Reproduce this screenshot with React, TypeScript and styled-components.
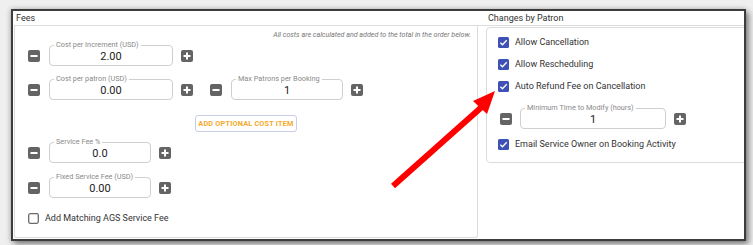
import React from 'react';
import styled, { createGlobalStyle } from 'styled-components';

const GlobalStyle = createGlobalStyle`
  body {
    margin: 0;
    background: #efefef;
    font-family: Roboto, "Liberation Sans", Arial, sans-serif;
  }
`

const Page = styled.div`
  position: relative;
  width: 753px;
  height: 245px;
  padding: 9px 0 0 11px;
  box-sizing: border-box;
  background: #efefef;
`

const Frame = styled.div`
  width: 735px;
  height: 232px;
  box-sizing: border-box;
  border: 2px solid #3c3c3c;
  background: #fff;
  overflow: hidden;
  display: flex;
  box-shadow: 3px 3px 6px rgba(0, 0, 0, 0.45), -1px 0 5px rgba(0, 0, 0, 0.2);
`

const FeesColumn = styled.div`
  margin-left: 1px;
  width: 464px;
  display: flex;
  flex-direction: column;
`

const ChangesColumn = styled.div`
  flex: 1;
  min-width: 0;
  display: flex;
  flex-direction: column;
`

const SectionTitle = styled.div<{ $indent: number }>`
  height: 14px;
  line-height: 14px;
  padding-left: ${p => p.$indent}px;
  border-bottom: 1px solid #dcdcdc;
  font-size: 9px;
  color: #333;
  white-space: nowrap;
`

const FeesBox = styled.div`
  height: 207px;
  border: 1px solid #dcdcdc;
  border-top: none;
  border-radius: 0 0 3px 3px;
  padding: 4px 6px 0 13px;
  display: flex;
  flex-direction: column;
`

const Note = styled.div`
  text-align: right;
  font-size: 7.1px;
  line-height: 10px;
  font-style: italic;
  color: #777;
  margin-bottom: 1px;
`

const StepperRow = styled.div<{ $top: number }>`
  display: flex;
  align-items: flex-end;
  margin-top: ${p => p.$top}px;
`

const StepButton = styled.svg<{ $before: number; $after: number }>`
  width: 12px;
  height: 12px;
  margin-bottom: 4px;
  margin-left: ${p => p.$before}px;
  margin-right: ${p => p.$after}px;
  flex-shrink: 0;
`

const Field = styled.fieldset<{ $width: number }>`
  width: ${p => p.$width}px;
  box-sizing: border-box;
  margin: 0;
  padding: 0;
  border: 1px solid #cfcfcf;
  border-radius: 4px;
  min-width: 0;
`

const Legend = styled.legend`
  font-size: 7.3px;
  line-height: 8px;
  color: #8a8a8a;
  padding: 0 2px;
  margin-left: 4px;
  white-space: nowrap;
`

const FieldValue = styled.div`
  height: 16px;
  line-height: 16px;
  text-align: center;
  font-size: 11px;
  color: #222;
`

const AddButton = styled.button`
  align-self: center;
  margin: 15px 0 0 -7px;
  width: 102px;
  height: 17px;
  padding: 0;
  border: 1px solid #c9cdea;
  border-radius: 3px;
  background: #fff;
  color: #f3aa2a;
  font-family: Roboto, "Liberation Sans", Arial, sans-serif;
  font-size: 7.3px;
  font-weight: 700;
  letter-spacing: 0.2px;
`

const CheckRow = styled.div<{ $top?: number }>`
  display: flex;
  align-items: center;
  height: 22px;
  margin-top: ${p => p.$top ?? 0}px;
  font-size: 9px;
  color: #333;
  white-space: nowrap;
`

const Box = styled.svg`
  width: 11px;
  height: 11px;
  margin-right: 6px;
  flex-shrink: 0;
`

const ChangesCard = styled.div`
  margin: 1px 0 0 8px;
  width: 300px;
  height: 136px;
  box-sizing: border-box;
  border: 1px solid #dcdcdc;
  border-radius: 4px;
  padding: 3px 0 0 11px;
  display: flex;
  flex-direction: column;
`

const CardStepper = styled.div`
  margin-left: 2px;
`

const ArrowOverlay = styled.svg`
  position: absolute;
  left: 0;
  top: 0;
  width: 753px;
  height: 245px;
  pointer-events: none;
`

const Minus = ({ after = 9 }: { after?: number }) => (
  <StepButton $before={0} $after={after} viewBox="0 0 12 12">
    <rect width="12" height="12" rx="2" fill="#646464" />
    <rect x="2.5" y="5" width="7" height="2" fill="#fff" />
  </StepButton>
)

const Plus = ({ after = 0 }: { after?: number }) => (
  <StepButton $before={8} $after={after} viewBox="0 0 12 12">
    <rect width="12" height="12" rx="2" fill="#646464" />
    <rect x="2.5" y="5" width="7" height="2" fill="#fff" />
    <rect x="5" y="2.5" width="2" height="7" fill="#fff" />
  </StepButton>
)

const Check = ({ checked }: { checked: boolean }) => (
  <Box viewBox="0 0 11 11">
    {checked ? (
      <>
        <rect width="11" height="11" rx="1.5" fill="#3f51b5" />
        <path d="M2.4 5.7 L4.5 7.8 L8.7 3.2" stroke="#fff" strokeWidth="1.3" fill="none" />
      </>
    ) : (
      <rect x="0.7" y="0.7" width="9.6" height="9.6" rx="1.5" fill="#fff" stroke="#6a6a6a" strokeWidth="1.3" />
    )}
  </Box>
)

const NumberField = ({ label, value, width }: { label: string; value: string; width: number }) => (
  <Field $width={width}>
    <Legend>{label}</Legend>
    <FieldValue>{value}</FieldValue>
  </Field>
)

const App = () => {
  return (
    <Page>
      <GlobalStyle />
      <Frame>
        <FeesColumn>
          <SectionTitle $indent={2}>Fees</SectionTitle>
          <FeesBox>
            <Note>All costs are calculated and added to the total in the order below.</Note>

            <StepperRow $top={0}>
              <Minus />
              <NumberField label="Cost per Increment (USD)" value="2.00" width={124} />
              <Plus />
            </StepperRow>

            <StepperRow $top={9}>
              <Minus />
              <NumberField label="Cost per patron (USD)" value="0.00" width={124} />
              <Plus after={17} />
              <Minus />
              <NumberField label="Max Patrons per Booking" value="1" width={112} />
              <Plus />
            </StepperRow>

            <AddButton>ADD OPTIONAL COST ITEM</AddButton>

            <StepperRow $top={6}>
              <Minus />
              <NumberField label="Service Fee %" value="0.0" width={102} />
              <Plus />
            </StepperRow>

            <StepperRow $top={10}>
              <Minus />
              <NumberField label="Fixed Service Fee (USD)" value="0.00" width={102} />
              <Plus />
            </StepperRow>

            <CheckRow $top={9}>
              <Check checked={false} />
              Add Matching AGS Service Fee
            </CheckRow>
          </FeesBox>
        </FeesColumn>

        <ChangesColumn>
          <SectionTitle $indent={10}>Changes by Patron</SectionTitle>
          <ChangesCard>
            <CheckRow>
              <Check checked />
              Allow Cancellation
            </CheckRow>
            <CheckRow>
              <Check checked />
              Allow Rescheduling
            </CheckRow>
            <CheckRow>
              <Check checked />
              Auto Refund Fee on Cancellation
            </CheckRow>
            <CardStepper>
              <StepperRow $top={7}>
                <Minus after={8} />
                <NumberField label="Minimum Time to Modify (hours)" value="1" width={146} />
                <Plus />
              </StepperRow>
            </CardStepper>
            <CheckRow $top={4}>
              <Check checked />
              Email Service Owner on Booking Activity
            </CheckRow>
          </ChangesCard>
        </ChangesColumn>
      </Frame>

      <ArrowOverlay viewBox="0 0 753 245">
        <line x1="393" y1="186" x2="484" y2="105" stroke="#ff0000" strokeWidth="6" />
        <polygon points="495,91 473,101 487,114" fill="#ff0000" />
      </ArrowOverlay>
    </Page>
  );
}

export default App;
